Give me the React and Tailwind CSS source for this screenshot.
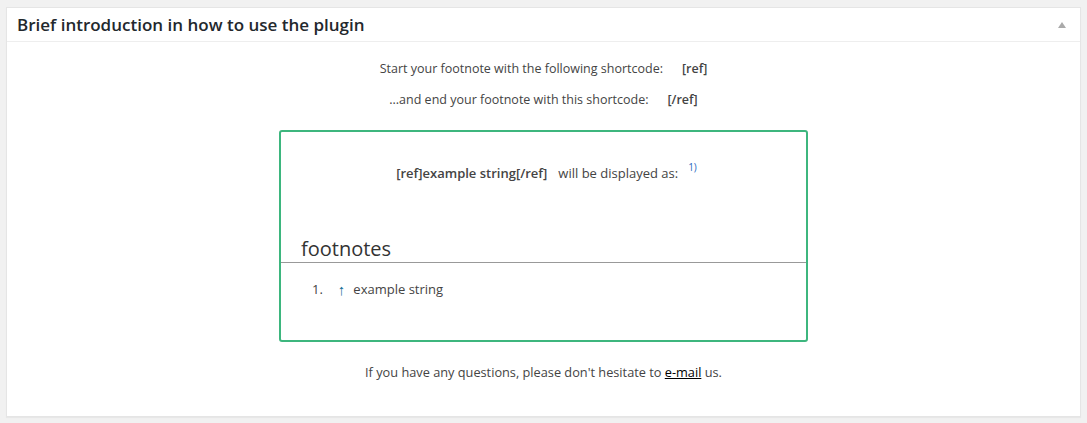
export default function App() {
  return (
    <div className="min-h-[423px] w-full bg-[#f1f1f1] pt-[7px] px-[6px] font-['Open_Sans',sans-serif] text-[#444]">
      <div className="border border-[#e5e5e5] bg-white shadow-[0_1px_1px_rgba(0,0,0,0.04)]">
        {/* Header */}
        <div className="flex h-[34px] items-center justify-between border-b border-[#eee] pl-[10px] pr-[14px]">
          <h3 className="text-[17px] font-semibold text-[#23282d]">Brief introduction in how to use the plugin</h3>
          <span className="h-0 w-0 border-x-[4px] border-b-[6px] border-x-transparent border-b-[#aaa]" />
        </div>

        {/* Body */}
        <div className="flex flex-col items-center pt-[18px] pb-[35px] text-[12.5px]">
          <p className="leading-[18px]">
            Start your footnote with the following shortcode:<span className="ml-[19px] font-semibold">[ref]</span>
          </p>
          <p className="mt-[13px] leading-[18px]">
            ...and end your footnote with this shortcode:<span className="ml-[19px] font-semibold">[/ref]</span>
          </p>

          {/* Example box */}
          <div className="mt-[21px] h-[212px] w-[529px] rounded-[3px] border-2 border-[#3db67e] text-[13px]">
            <div className="mt-[28px] flex items-start justify-center pl-[6px]">
              <span className="mt-[4px] font-semibold">[ref]example string[/ref]</span>
              <span className="ml-[11px] mt-[4px]">will be displayed as:</span>
              <sup className="ml-[10px] mt-[7px] text-[10px] leading-none text-[#2a6bc0]">1)</sup>
            </div>
            <div className="mt-[52px] pl-[20px] text-[20px] leading-[26px] text-[#333]">footnotes</div>
            <div className="border-t border-[#999]" />
            <div className="mt-[17px] flex items-center pl-[31px] leading-[18px]">
              <span>1.</span>
              <span className="ml-[15px] text-[15px] font-semibold leading-[18px] text-[#0e6a94]">↑</span>
              <span className="ml-[8px]">example string</span>
            </div>
          </div>

          <p className="mt-[21px] text-[12.75px] leading-[18px]">
            If you have any questions, please don't hesitate to <span className="text-black underline">e-mail</span> us.
          </p>
        </div>
      </div>
    </div>
  );
}
